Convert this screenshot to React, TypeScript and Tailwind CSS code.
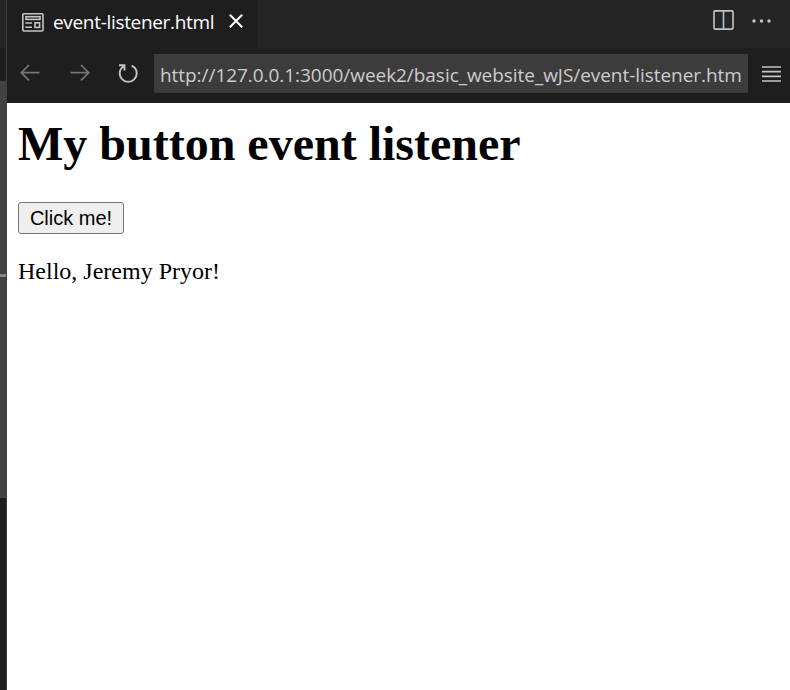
import React from "react";

const stroke = { fill: "none", stroke: "currentColor" } as const;

function EditorEdge() {
  return (
    <div className="flex w-[7px] shrink-0 flex-col border-r border-[#414141] bg-[#1e1e1e]">
      <div className="h-12 bg-[#252526]" />
      <div className="h-[33px]" />
      <div className="h-[193px] bg-[#424242]" />
      <div className="h-[3px] bg-[#868686]" />
      <div className="h-[221px] bg-[#424242]" />
    </div>
  );
}

function TabBar() {
  return (
    <div className="flex h-12 bg-[#252526]">
      <div className="flex w-[250px] items-center bg-[#1e1e1e] pl-[15px] text-white">
        <svg width="22" height="19" viewBox="0 0 22 19" className="mt-[-4px] shrink-0 text-[#c5c5c5]" {...stroke} strokeWidth="1.6">
          <rect x="0.8" y="0.8" width="20.2" height="17.2" rx="1" />
          <rect x="4" y="3.7" width="14" height="2.7" />
          <path d="M3.3 10H10M3.3 14.2H10" />
          <rect x="13" y="9.8" width="4.6" height="4.6" />
        </svg>
        <span className="ml-[9px] mt-[-4px] w-[161px] whitespace-nowrap text-[19px] leading-6 tracking-[-0.32px]">event-listener.html</span>
        <svg width="14" height="14" viewBox="0 0 14 14" className="ml-[15px] mt-[-6px] shrink-0" {...stroke} strokeWidth="2">
          <path d="M.8.8 13.2 13.2M13.2.8.8 13.2" />
        </svg>
      </div>
      <div className="flex flex-1 items-start justify-end pr-[18px] text-[#c5c5c5]">
        <svg width="21" height="20" viewBox="0 0 21 20" className="mt-[10px]" {...stroke} strokeWidth="1.6">
          <rect x="1" y="0.9" width="19" height="18.2" rx="1" />
          <path d="M10.5 1v18" stroke="#a9c6dc" />
        </svg>
        <svg width="20" height="4" viewBox="0 0 20 4" className="ml-[18px] mt-[19px]" fill="currentColor">
          <circle cx="2" cy="2" r="1.7" />
          <circle cx="9.5" cy="2" r="1.7" />
          <circle cx="17" cy="2" r="1.7" />
        </svg>
      </div>
    </div>
  );
}

function AddressBar() {
  return (
    <div className="flex h-[55px] items-start bg-[#1e1e1e] text-[#c5c5c5]">
      <svg width="20" height="18" viewBox="0 0 20 18" className="ml-[13px] mt-4 text-[#757575]" {...stroke} strokeWidth="1.7">
        <path d="M9 1 1.3 8.7 9 16.4M1.3 8.7H19.5" />
      </svg>
      <svg width="20" height="18" viewBox="0 0 20 18" className="ml-[30px] mt-4 text-[#757575]" {...stroke} strokeWidth="1.7">
        <path d="m11 1 7.7 7.7L11 16.4M18.7 8.7H.5" />
      </svg>
      <svg width="20" height="20" viewBox="0 0 20 20" className="ml-[28px] mt-4" {...stroke} strokeWidth="1.9">
        <path d="M1 1.3H6.5V6.6M6.2 2C3.4 3.6 1.7 6.2 1.7 9.4A8.5 8.5 0 0 0 18.7 9.4C18.7 6 16.8 3.1 13.6 1.7" />
      </svg>
      <div className="ml-4 mt-[6px] flex h-[39px] w-[594px] items-center overflow-hidden bg-[#3c3c3c] pl-[6px]">
        <span className="whitespace-nowrap pt-[3px] text-[19px] leading-6 tracking-[-0.05px] text-[#cccccc]">
          http://127.0.0.1:3000/week2/basic_website_wJS/event-listener.htm
        </span>
      </div>
      <svg width="19" height="17" viewBox="0 0 19 17" className="ml-[14px] mt-[18px]" {...stroke} strokeWidth="1.7">
        <path d="M0 1H19M0 5.7H19M0 10.3H19M0 15H19" />
      </svg>
    </div>
  );
}

export default function App() {
  return (
    <div className="flex h-[690px] w-[790px] overflow-hidden bg-white font-['Open_Sans','Noto_Sans',sans-serif]">
      <EditorEdge />
      <div className="flex min-w-0 flex-1 flex-col">
        <TabBar />
        <AddressBar />
        <main className="flex flex-1 flex-col items-start bg-white pl-[11px] font-['Liberation_Serif',serif] text-black">
          <h1 className="mt-[13px] whitespace-nowrap text-[48px] font-bold leading-[56px]">My button event listener</h1>
          <button className="mt-[30px] h-8 w-[106px] whitespace-nowrap rounded-[3px] border border-[#767676] bg-[#efefef] font-['Liberation_Sans',sans-serif] text-[20px] leading-7">
            Click me!
          </button>
          <p className="mt-[23px] whitespace-nowrap text-[24px] leading-7">Hello, Jeremy Pryor!</p>
        </main>
      </div>
    </div>
  );
}
